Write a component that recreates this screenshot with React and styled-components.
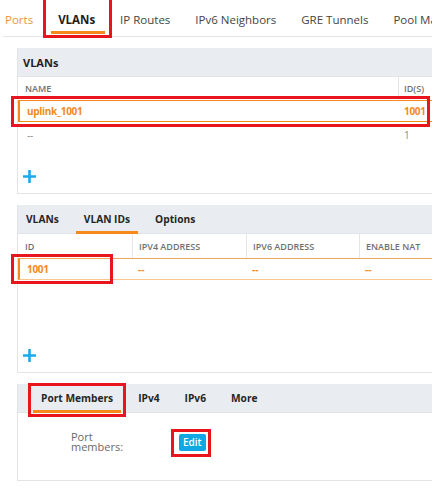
import React from "react";
import styled, { createGlobalStyle, css } from "styled-components";

const orange = "#f5891c";
const red = "#e9151d";

const GlobalStyle = createGlobalStyle`
  body {
    margin: 0;
    background: #fff;
    font-family: "Open Sans", "Liberation Sans", sans-serif;
  }
`;

// red annotation frame drawn over the element
const marked = css`
  ${(p) =>
    p.$mark &&
    css`
      &::before {
        content: "";
        position: absolute;
        inset: ${p.$mark};
        border: 3px solid ${red};
        z-index: 2;
        pointer-events: none;
      }
    `}
`;

const topTabs = ["Ports", "VLANs", "IP Routes", "IPv6 Neighbors", "GRE Tunnels", "Pool Manager"];

const vlans = [
  { name: "uplink_1001", ids: "1001", selected: true },
  { name: "--", ids: "1" },
];

function Plus() {
  return (
    <svg width="13" height="13" viewBox="0 0 13 13">
      <path d="M6.5 0v13M0 6.5h13" stroke="#1ea9e6" strokeWidth="2.6" />
    </svg>
  );
}

function App() {
  return (
    <Page>
      <GlobalStyle />
      <TopBar>
        {topTabs.map((t) => (
          <TopTab
            key={t}
            $link={t === "Ports"}
            $active={t === "VLANs"}
            $mark={t === "VLANs" ? "-7px -17px -2px -15px" : null}
          >
            {t}
          </TopTab>
        ))}
      </TopBar>

      <Panel>
        <PanelHeader>
          <Title>VLANs</Title>
        </PanelHeader>
        <Grid $cols="380px 1fr">
          <HeadCell>Name</HeadCell>
          <HeadCell $divider $pad="5px">ID(s)</HeadCell>
        </Grid>
        {vlans.map((v) => (
          <Row
            key={v.name}
            $cols="378px 1fr"
            $selected={v.selected}
            $mark={v.selected ? "-5px 2px -6px -9px" : null}
          >
            <Cell $selected={v.selected}>{v.name}</Cell>
            <Cell $selected={v.selected} $pad="6px">{v.ids}</Cell>
          </Row>
        ))}
        <AddBar $top="23px">
          <Plus />
        </AddBar>
      </Panel>

      <Panel>
        <PanelHeader>
          <SubTab>VLANs</SubTab>
          <SubTab $active>VLAN IDs</SubTab>
          <SubTab>Options</SubTab>
        </PanelHeader>
        <Grid $cols="114px 114px 113px 1fr" $h="24px">
          <HeadCell>ID</HeadCell>
          <HeadCell $divider $pad="6px">IPv4 Address</HeadCell>
          <HeadCell $divider $pad="6px">IPv6 Address</HeadCell>
          <HeadCell $divider $pad="6px">Enable NAT</HeadCell>
        </Grid>
        <Row $cols="112px 114px 113px 1fr" $selected $soft>
          <MarkCell $selected $mark="-5px 19px -5px -9px">1001</MarkCell>
          <Dash>--</Dash>
          <Dash>--</Dash>
          <Dash>--</Dash>
        </Row>
        <AddBar $top="69px">
          <Plus />
        </AddBar>
      </Panel>

      <Panel>
        <PanelHeader>
          <SubTab $active $first $mark="-1px -5px -5px -5px">Port Members</SubTab>
          <SubTab>IPv4</SubTab>
          <SubTab>IPv6</SubTab>
          <SubTab>More</SubTab>
        </PanelHeader>
        <Form>
          <Label>Port members:</Label>
          <EditWrap $mark="-5px -5px -6px -8px">
            <EditButton>Edit</EditButton>
          </EditWrap>
        </Form>
      </Panel>
    </Page>
  );
}

export default App;

const Page = styled.div`
  width: 432px;
  height: 490px;
  overflow: hidden;
`;

const TopBar = styled.nav`
  display: flex;
  gap: 25px;
  margin-left: 3px;
  padding-left: 2px;
  border-bottom: 1px solid #e4e4e4;
  white-space: nowrap;
`;

const TopTab = styled.div`
  position: relative;
  padding: 11px 0 8px;
  font-size: 11.5px;
  line-height: 17px;
  color: ${(p) => (p.$link ? "#e8953e" : "#444")};
  font-weight: ${(p) => (p.$active ? 700 : 400)};
  ${(p) =>
    p.$active &&
    css`
      color: #1d1d1d;
      &::after {
        content: "";
        position: absolute;
        left: -7px;
        right: -10px;
        bottom: 2px;
        height: 3px;
        background: ${orange};
      }
    `}
  ${marked}
`;

const Panel = styled.section`
  margin: 11px 0 0 17px;
  border-left: 1px solid #e4e4e4;
  border-bottom: 1px solid #e4e4e4;
`;

const PanelHeader = styled.div`
  display: flex;
  align-items: stretch;
  gap: 9px;
  height: 29px;
  background: #e9ecf0;
  border-bottom: 1px solid #e1e4e8;
  box-sizing: border-box;
`;

const Title = styled.div`
  align-self: center;
  padding-left: 5px;
  font-size: 11px;
  font-weight: 700;
  color: #1f1f1f;
`;

const SubTab = styled.div`
  position: relative;
  display: flex;
  align-items: center;
  padding: 0 8px;
  margin-left: ${(p) => (p.$first ? "15px" : "0")};
  font-size: 10.2px;
  font-weight: 700;
  color: #262626;
  ${(p) =>
    p.$active &&
    css`
      &::after {
        content: "";
        position: absolute;
        left: 0;
        right: 0;
        bottom: -1px;
        height: 3px;
        background: ${orange};
      }
    `}
  ${marked}
`;

const Grid = styled.div`
  display: grid;
  grid-template-columns: ${(p) => p.$cols};
  height: ${(p) => p.$h || "23px"};
`;

const HeadCell = styled.div`
  display: flex;
  align-items: center;
  padding-left: ${(p) => p.$pad || "7px"};
  border-left: ${(p) => (p.$divider ? "1px solid #e6e6e6" : "none")};
  font-size: 9px;
  font-weight: 600;
  text-transform: uppercase;
  color: #707070;
  white-space: nowrap;
`;

const Row = styled.div`
  position: relative;
  display: grid;
  grid-template-columns: ${(p) => p.$cols};
  box-sizing: border-box;
  height: ${(p) => (p.$selected ? "22px" : "25px")};
  border-left: 2px solid ${(p) => (p.$selected ? orange : "transparent")};
  ${(p) =>
    p.$selected &&
    css`
      border-top: 1px solid ${p.$soft ? "#f3a65c" : orange};
      border-bottom: 1px solid ${p.$soft ? "#fac68e" : orange};
    `}
  ${marked}
`;

const Cell = styled.div`
  display: flex;
  align-items: center;
  padding-left: ${(p) => p.$pad || "7px"};
  font-size: 10px;
  letter-spacing: -0.3px;
  white-space: nowrap;
  font-weight: ${(p) => (p.$selected ? 700 : 400)};
  color: ${(p) => (p.$selected ? orange : "#8a8a8a")};
`;

const MarkCell = styled(Cell)`
  position: relative;
  ${marked}
`;

const Dash = styled.div`
  display: flex;
  align-items: center;
  padding-left: 6px;
  font-size: 10px;
  font-weight: 700;
  color: ${orange};
`;

const AddBar = styled.div`
  display: flex;
  padding: ${(p) => p.$top} 0 10px 5px;
`;

const Form = styled.div`
  display: grid;
  grid-template-columns: 108px auto;
  align-items: start;
  height: 67px;
  padding: 19px 0 0 53px;
  box-sizing: border-box;
`;

const Label = styled.div`
  width: 62px;
  font-size: 11px;
  line-height: 10px;
  color: #6a6a6a;
`;

const EditWrap = styled.div`
  position: relative;
  justify-self: start;
  margin-top: 2px;
  ${marked}
`;

const EditButton = styled.button`
  display: block;
  height: 17px;
  padding: 0 4px;
  border: none;
  border-radius: 2px;
  background: #11a6e4;
  color: #fff;
  font-family: inherit;
  font-size: 10px;
  font-weight: 600;
  line-height: 17px;
`;
